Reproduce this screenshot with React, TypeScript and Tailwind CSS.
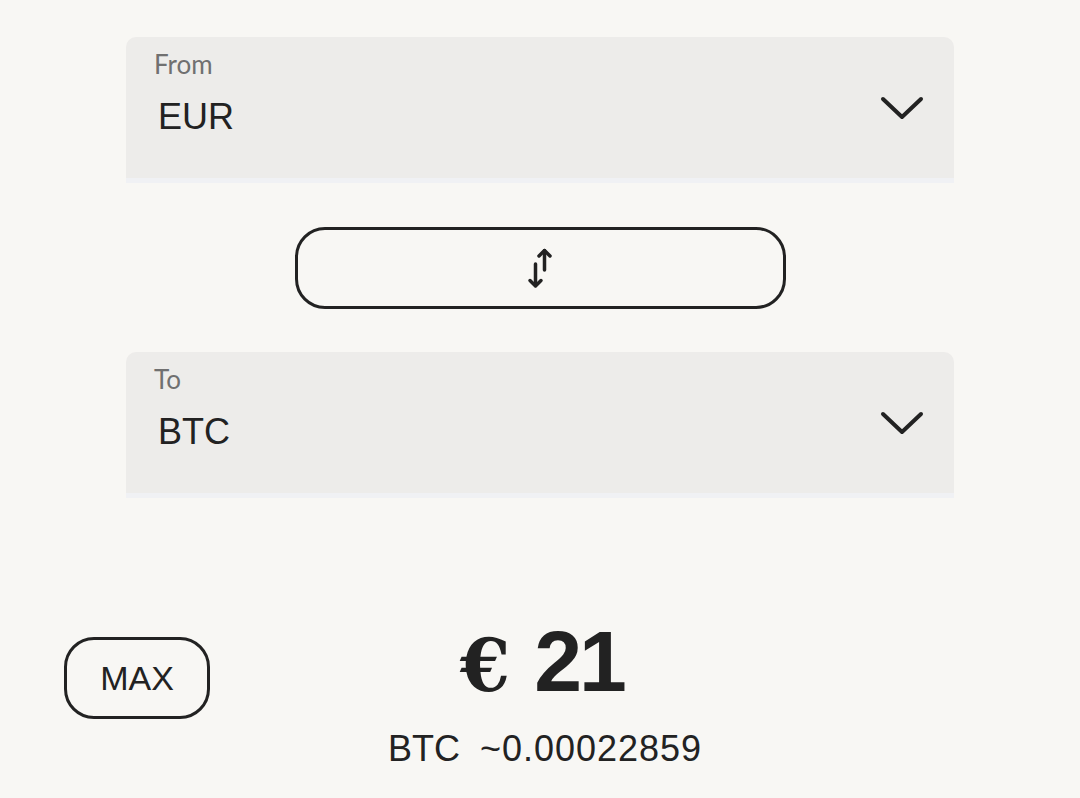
import React from 'react'

const sans = { fontFamily: '"Liberation Sans", Arial, sans-serif' }

function Chevron() {
  return (
    <svg width="44" height="24" viewBox="0 0 44 24" fill="none">
      <polyline points="3,3 22,21 41,3" stroke="#222222" strokeWidth="4" strokeLinecap="round" strokeLinejoin="round" />
    </svg>
  )
}

function SwapIcon() {
  return (
    <svg width="28" height="42" viewBox="0 0 28 42" fill="none" stroke="#222222" strokeWidth="3.5" strokeLinecap="round" strokeLinejoin="round">
      <line x1="9.5" y1="17" x2="9.5" y2="38.5" />
      <polyline points="4,33.5 9.5,39 15,33.5" />
      <line x1="18.5" y1="3.5" x2="18.5" y2="23" />
      <polyline points="13,9 18.5,3.5 24,9" />
    </svg>
  )
}

function CurrencyField({ label, value }: { label: string; value: string }) {
  return (
    <div className="w-[828px] rounded-t-[10px] bg-[#edecea] border-b-[5px] border-[#f0f1f4] h-[146px] flex justify-between">
      <div className="flex flex-col pt-[14px]">
        <span className="pl-[28px] text-[26px] leading-none text-[#707070]" style={{ fontFamily: 'Lato, "Liberation Sans", sans-serif' }}>
          {label}
        </span>
        <span className="pl-[32px] mt-[22px] text-[36px] leading-none text-[#222222]" style={sans}>
          {value}
        </span>
      </div>
      <div className="pr-[30px] flex items-center">
        <Chevron />
      </div>
    </div>
  )
}

export default function App() {
  return (
    <div className="min-h-screen bg-[#f8f7f4] flex flex-col items-center pt-[37px]" style={sans}>
      <CurrencyField label="From" value="EUR" />

      <button className="mt-[44px] w-[491px] h-[82px] rounded-[30px] border-[3px] border-[#222222] flex items-center justify-center">
        <SwapIcon />
      </button>

      <div className="mt-[43px]">
        <CurrencyField label="To" value="BTC" />
      </div>

      {/* Amount row */}
      <div className="w-full grid grid-cols-[1fr_auto_1fr] mt-[120px]">
        <div className="pl-[64px] pt-[19px]">
          <button className="w-[146px] h-[82px] rounded-[30px] border-[3px] border-[#222222] text-[34px] leading-none text-[#222222] flex items-center justify-center">
            MAX
          </button>
        </div>
        <div className="flex flex-col items-center text-[#222222]">
          <div className="flex items-baseline leading-none pl-[4px]">
            <span className="text-[72px] font-bold" style={{ fontFamily: '"DejaVu Serif", "Liberation Serif", serif' }}>€</span>
            <span className="ml-[24px] text-[86px] font-bold tracking-[-3px]">21</span>
          </div>
          <div className="mt-[27px] pl-[10px] text-[36px] leading-none whitespace-pre">
            BTC  <span className="tracking-[1px]">~0.00022859</span>
          </div>
        </div>
        <div />
      </div>
    </div>
  )
}
